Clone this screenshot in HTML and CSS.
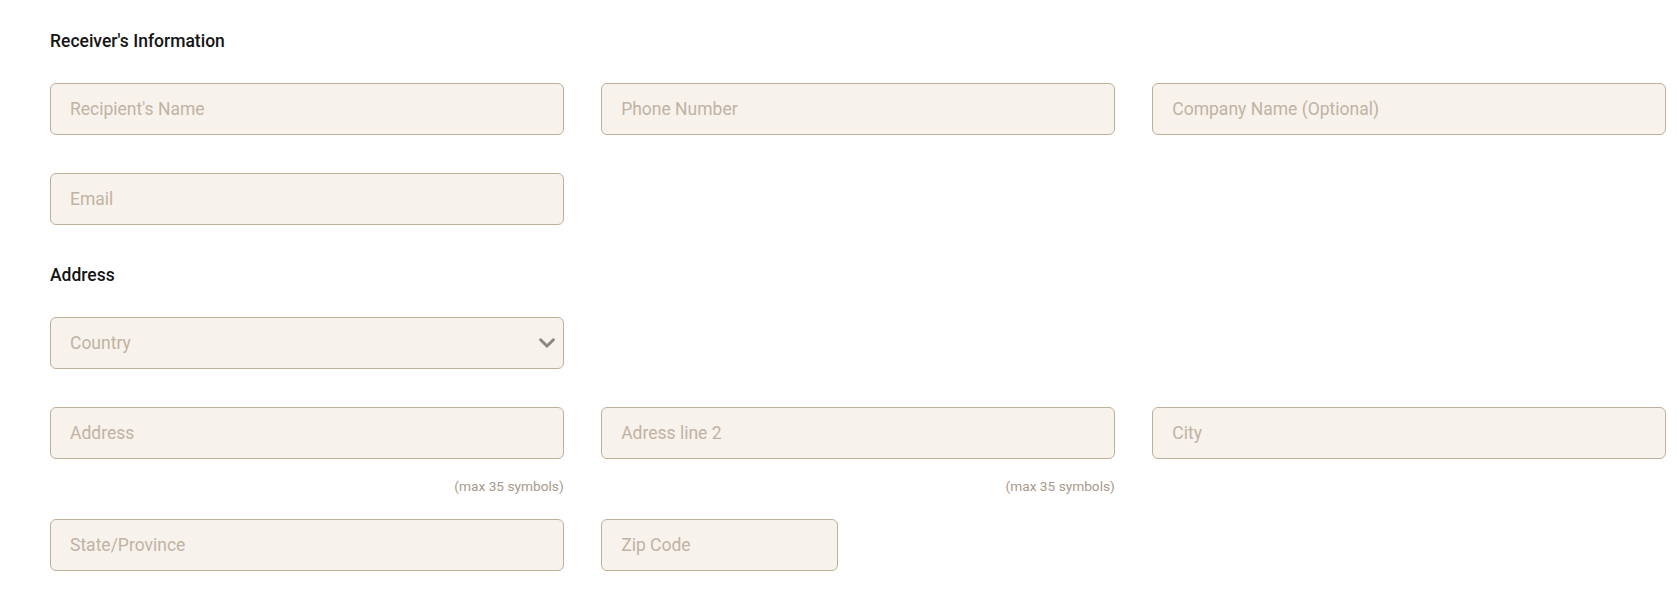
FILE: index.html
```html
<!DOCTYPE html>
<html lang="en">
<head>
<meta charset="utf-8">
<title>Receiver's Information</title>
<link rel="stylesheet" href="styles.css">
</head>
<body>
<form class="form">
  <h2 class="section-title">Receiver's Information</h2>
  <div class="row">
    <input class="field" type="text" placeholder="Recipient's Name">
    <input class="field" type="text" placeholder="Phone Number">
    <input class="field" type="text" placeholder="Company Name (Optional)">
  </div>
  <div class="row">
    <input class="field" type="email" placeholder="Email">
  </div>

  <h2 class="section-title address-title">Address</h2>
  <div class="row">
    <div class="select-wrap">
      <select class="field select">
        <option selected disabled>Country</option>
      </select>
      <svg class="chevron" viewBox="5 123 438 266" width="16" height="10" aria-hidden="true">
        <path d="M207.029 381.476L12.686 187.132c-9.373-9.373-9.373-24.569 0-33.941l22.667-22.667c9.357-9.357 24.522-9.375 33.901-.04L224 284.505l154.745-154.021c9.379-9.335 24.544-9.317 33.901.04l22.667 22.667c9.373 9.373 9.373 24.569 0 33.941L240.971 381.476c-9.373 9.372-24.569 9.372-33.942 0z"/>
      </svg>
    </div>
  </div>
  <div class="row row-hints">
    <div class="field-group">
      <input class="field" type="text" placeholder="Address">
      <span class="hint">(max 35 symbols)</span>
    </div>
    <div class="field-group">
      <input class="field" type="text" placeholder="Adress line 2">
      <span class="hint">(max 35 symbols)</span>
    </div>
    <div class="field-group">
      <input class="field" type="text" placeholder="City">
    </div>
  </div>
  <div class="row row-last">
    <input class="field" type="text" placeholder="State/Province">
    <input class="field field-zip" type="text" placeholder="Zip Code">
  </div>
</form>
</body>
</html>
```

FILE: styles.css
```css
* {
  box-sizing: border-box;
}

html, body {
  margin: 0;
  padding: 0;
  background: #ffffff;
}

body {
  font-family: Roboto, "Liberation Sans", Arial, sans-serif;
  color: #141414;
}

.form {
  padding: 31px 11px 0 50px;
}

.section-title {
  margin: 0 0 32px;
  font-size: 17.5px;
  line-height: 20px;
  font-weight: 500;
  color: #141414;
}

.address-title {
  padding-top: 2px;
  margin-bottom: 32px;
}

.row {
  display: grid;
  grid-template-columns: repeat(3, 1fr);
  column-gap: 37.5px;
  margin-bottom: 38px;
  align-items: start;
}

.row-hints {
  margin-bottom: 25px;
}

.field {
  display: block;
  width: 100%;
  height: 52px;
  margin: 0;
  padding: 0 19px;
  border: 1px solid #bfae99;
  border-radius: 6px;
  background: #f7f3ec;
  font-family: Roboto, "Liberation Sans", Arial, sans-serif;
  font-size: 17.5px;
  color: #c1b2a3;
  outline: none;
}

.field::placeholder {
  color: #c1b2a3;
  opacity: 1;
}

.field-zip {
  width: 237px;
}

.select-wrap {
  position: relative;
}

.select {
  -webkit-appearance: none;
  appearance: none;
  padding-right: 40px;
}

.chevron {
  position: absolute;
  right: 9px;
  top: 21px;
  fill: #8b8782;
  pointer-events: none;
}

.field-group {
  display: flex;
  flex-direction: column;
  align-items: flex-end;
}

.hint {
  display: block;
  margin-top: 19px;
  font-size: 13.7px;
  line-height: 16px;
  color: #a8998a;
}
```
